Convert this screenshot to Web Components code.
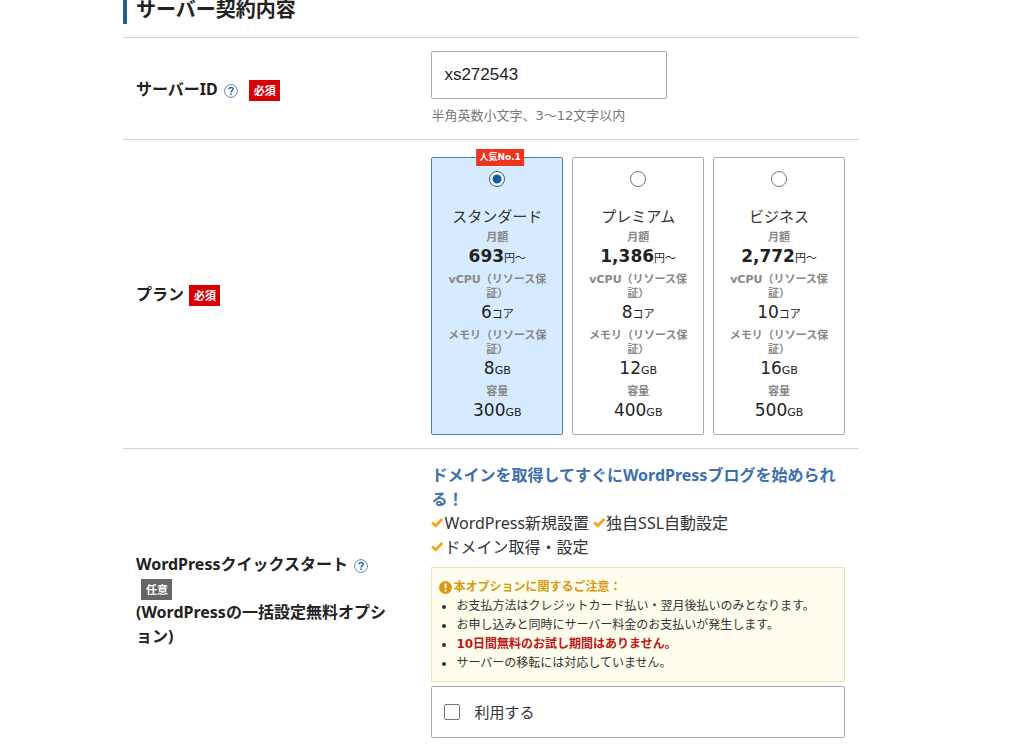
<!DOCTYPE html>
<html lang="ja">
<head>
<meta charset="utf-8">
<meta name="viewport" content="width=device-width, initial-scale=1">
<title>サーバー契約内容</title>
<style>
body { margin: 0; background: #fff; color: #222; font: 16px/24px "Noto Sans", "Noto Sans CJK JP", sans-serif; }
</style>
</head>
<body>
<contract-form>
  <section-heading>サーバー契約内容</section-heading>
  <form-row>
    <label slot="label" for="server-id">サーバーID</label>
    <help-icon slot="label"></help-icon>
    <status-badge slot="label" kind="required">必須</status-badge>
    <input id="server-id" type="text" value="xs272543">
    <field-hint>半角英数小文字、3〜12文字以内</field-hint>
  </form-row>
  <form-row>
    <span slot="label">プラン</span>
    <status-badge slot="label" kind="required">必須</status-badge>
    <plan-picker></plan-picker>
  </form-row>
  <form-row>
    <span slot="label">WordPressクイックスタート</span>
    <help-icon slot="label"></help-icon>
    <status-badge slot="label">任意</status-badge>
    <div slot="label">(WordPressの一括設定無料オプション)</div>
    <quick-start></quick-start>
    <notice-box></notice-box>
    <use-option></use-option>
  </form-row>
</contract-form>

<script>
const define = (name, html, setup) => {
  const template = document.createElement('template');
  template.innerHTML = html;
  customElements.define(name, class extends HTMLElement {
    constructor() {
      super();
      const root = this.attachShadow({ mode: 'open' });
      root.append(template.content.cloneNode(true));
      if (setup) setup(root);
    }
  });
};

define('contract-form', `
<style>
:host { display: block; margin: 0 165px 0 123px; }
@media (max-width: 900px) { :host { margin: 0 16px; } }
</style>
<slot></slot>`);

define('section-heading', `
<style>
:host { display: block; padding-bottom: 13px; }
h2 { margin: 0; border-left: 4px solid #1f5f96; padding: 0 0 4px 9px; font-size: 20px; line-height: 20px; }
</style>
<h2><slot></slot></h2>`);

define('form-row', `
<style>
:host { display: grid; grid-template-columns: 2fr 3fr; align-items: center; border-top: 1px solid #d4d4d4; }
.label { padding: 0 20px 0 13px; font-weight: 700; }
.content { padding: 13px 14px; min-width: 0; }
::slotted(input) {
  display: block; box-sizing: border-box; width: 236px; max-width: 100%; height: 48px; margin: 0;
  border: 1px solid #aaa; border-radius: 2px; padding: 0 12px; background: #fff; color: #222;
  font: 17px "Liberation Sans", Arial, sans-serif;
}
</style>
<div class="label"><slot name="label"></slot></div>
<div class="content"><slot></slot></div>`);

define('help-icon', `
<style>
:host { display: inline-block; margin: 0 6px; vertical-align: -3px; line-height: 0; }
button { display: block; width: 14px; height: 14px; padding: 0; border: 0; background: none; cursor: pointer; }
svg { display: block; }
</style>
<button type="button" aria-label="ヘルプ"><svg width="14" height="14" viewBox="0 0 14 14" fill="none" stroke="#2d6aa3"><circle cx="7" cy="7" r="6.4" stroke-width=".8"/><path d="M4.8 5.2C4.9 2.8 9.2 2.8 9.2 5.1C9.2 6.7 7 6.6 7 8.6" stroke-width="1.5"/><path d="M7 9.5V11.1" stroke-width="1.6"/></svg></button>`);

define('status-badge', `
<style>
:host { display: inline-block; box-sizing: border-box; height: 21px; margin: 3px 0 0 5px; padding: 0 4px 0 5px; vertical-align: top;
  background: #666; color: #fff; font-size: 11px; line-height: 21px; font-weight: 700; white-space: nowrap; }
:host([kind="required"]) { background: #d70007; }
</style>
<slot></slot>`);

define('field-hint', `
<style>
:host { display: block; margin-top: 7px; color: #777; font: 13px/20px "DejaVu Sans", "Noto Sans CJK JP", sans-serif; }
</style>
<slot></slot>`);

const plans = [
  { name: 'スタンダード', price: '693', cores: 6, memory: 8, disk: 300, tag: '人気No.1', checked: true },
  { name: 'プレミアム', price: '1,386', cores: 8, memory: 12, disk: 400 },
  { name: 'ビジネス', price: '2,772', cores: 10, memory: 16, disk: 500 }
];

define('plan-picker', `
<style>
:host { display: block; margin-top: 4px; font-family: "DejaVu Sans", "Noto Sans CJK JP", sans-serif; }
fieldset { display: grid; grid-template-columns: repeat(3, 1fr); gap: 9px; margin: 0; padding: 0; border: 0; min-width: 0; }
label { position: relative; display: block; border: 1px solid #aaa; border-radius: 2px; padding: 13px 12px; text-align: center; cursor: pointer; }
label:has(:checked) { background: #d6ebff; border-color: #4682a3; }
.tag { position: absolute; top: -9px; left: 50%; transform: translateX(-44%); padding: 0 3px; background: #f0351f; color: #fff;
  font-size: 9px; line-height: 17px; font-weight: 700; white-space: nowrap; }
input { appearance: none; display: block; box-sizing: border-box; width: 16px; height: 16px; margin: 0 auto; border: 1px solid #777; border-radius: 50%; background: #fff; }
input:checked { border-color: #1f5f96; background: radial-gradient(circle, #135d9e 4px, #fff 5px); }
.name { display: block; margin: 18px 0 2px; color: #333; font-size: 15px; line-height: 24px; }
dl { margin: 0; }
dt { color: #888; font-size: 11px; line-height: 14px; font-weight: 700; }
dd { height: 22px; margin: 0 0 6px; font-size: 17px; line-height: 22px; }
dd:last-child { margin: 0; }
small { font-size: 11px; line-height: 11px; }
</style>
<fieldset aria-label="プラン"></fieldset>`, root => {
  root.querySelector('fieldset').innerHTML = plans.map(p => `<label>${p.tag ? `<span class="tag">${p.tag}</span>` : ''}<input type="radio" name="plan"${p.checked ? ' checked' : ''}>
<span class="name">${p.name}</span>
<dl><dt>月額</dt><dd><b>${p.price}</b><small>円〜</small></dd>
<dt>vCPU（リソース保証）</dt><dd>${p.cores}<small>コア</small></dd>
<dt>メモリ（リソース保証）</dt><dd>${p.memory}<small>GB</small></dd>
<dt>容量</dt><dd>${p.disk}<small>GB</small></dd></dl></label>`).join('');
});

const check = '<svg width="13" height="12" viewBox="0 0 13 12" fill="none" stroke="#f5a51c" stroke-width="2.8"><path d="M1.2 5.4L4.6 8.8L11.4 2"/></svg>';

define('quick-start', `
<style>
:host { display: block; margin-top: 1px; color: #333; }
h3 { margin: 0; color: #3c70ae; font-size: 16px; line-height: 24px; }
ul { display: flex; flex-wrap: wrap; column-gap: 4px; margin: 0; padding: 0; list-style: none; }
li { display: flex; align-items: center; }
li:last-child { flex-basis: 100%; }
</style>
<h3>ドメインを取得してすぐにWordPressブログを始められる！</h3>
<ul><li>${check}WordPress新規設置</li><li>${check}独自SSL自動設定</li><li>${check}ドメイン取得・設定</li></ul>`);

define('notice-box', `
<style>
:host { display: block; margin-top: 8px; border: 1px solid #e9e6b8; padding: 10px 7px 8px; background: #fffeee; color: #333;
  font: 12px/19px "DejaVu Sans", "Noto Sans CJK JP", sans-serif; }
h4 { display: flex; align-items: center; gap: 1px; margin: 0; color: #d69a14; font-size: 12px; }
ul { margin: 0; padding-left: 17px; }
strong { color: #c41414; }
</style>
<h4><svg width="13" height="13" viewBox="0 0 13 13"><circle cx="6.5" cy="6.5" r="6.5" fill="#d69a14"/><path d="M6.5 2.5V7.5M6.5 8.8V10.6" stroke="#fff" stroke-width="1.8"/></svg>本オプションに関するご注意：</h4>
<ul><li>お支払方法はクレジットカード払い・翌月後払いのみとなります。</li><li>お申し込みと同時にサーバー料金のお支払いが発生します。</li><li><strong>10日間無料のお試し期間はありません。</strong></li><li>サーバーの移転には対応していません。</li></ul>`);

define('use-option', `
<style>
:host { display: block; margin-top: 4px; color: #333; }
label { display: flex; align-items: center; gap: 14px; border: 1px solid #aaa; border-radius: 2px; padding: 13px 12px; font-size: 15px; line-height: 24px; cursor: pointer; }
input { appearance: none; box-sizing: border-box; width: 16px; height: 16px; margin: 0; border: 1px solid #777; border-radius: 2px; background: #fff; }
input:checked { background: #135d9e; }
</style>
<label><input type="checkbox">利用する</label>`);
</script>
</body>
</html>
